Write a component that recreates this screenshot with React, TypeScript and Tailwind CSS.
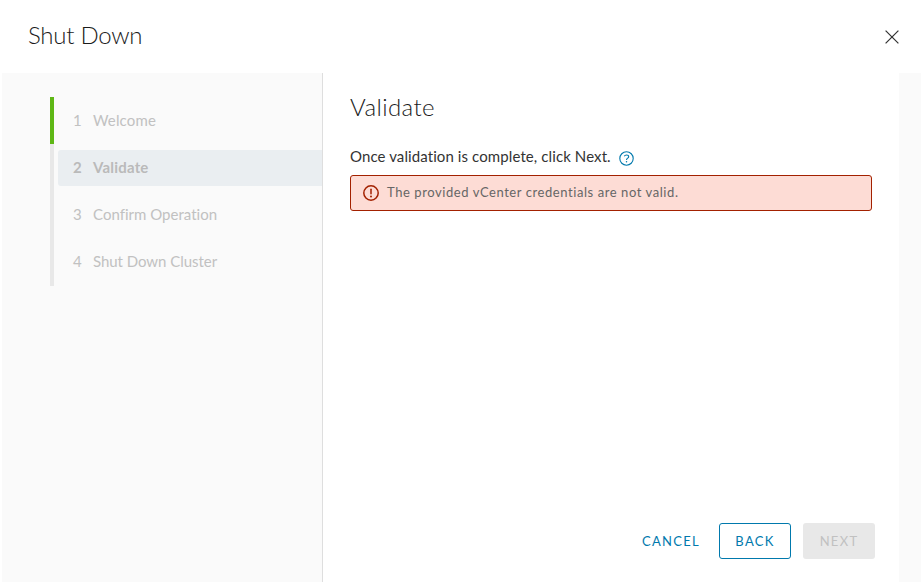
import React from "react";

const steps = [
  { label: "Welcome", spacing: "tracking-[0.15px]" },
  { label: "Validate", spacing: "tracking-[0.2px]" },
  { label: "Confirm Operation", spacing: "tracking-[0.01px]" },
  { label: "Shut Down Cluster", spacing: "tracking-[-0.04px]" },
];

const current = 1;

function CloseIcon() {
  return (
    <svg width="14" height="14" viewBox="0 0 14 14" fill="none" stroke="#333" strokeWidth="1.25">
      <path d="M0.6 0.6L13.4 13.4M13.4 0.6L0.6 13.4" />
    </svg>
  );
}

function HelpIcon() {
  return (
    <svg width="15" height="15" viewBox="0 0 15 15" fill="none" stroke="#0079ad" strokeWidth="1.1">
      <circle cx="7.5" cy="7.5" r="6.7" />
      <path d="M5.2 5.3C5.7 4.4 6.5 4 7.5 4C8.8 4 9.7 4.7 9.7 5.7C9.7 7.1 7.5 7.1 7.5 8.9" />
      <circle cx="7.5" cy="10.8" r="0.75" fill="#0079ad" stroke="none" />
    </svg>
  );
}

function ErrorIcon() {
  return (
    <svg width="16" height="16" viewBox="0 0 16 16" fill="none" stroke="#a32100" strokeWidth="1.5">
      <circle cx="8" cy="8" r="7.2" />
      <path d="M8 4.2V8.8" strokeLinecap="round" />
      <circle cx="8" cy="11.5" r="1" fill="#a32100" stroke="none" />
    </svg>
  );
}

export default function App() {
  return (
    <div className="flex h-[582px] w-[921px] flex-col overflow-hidden bg-white font-['Lato','Open_Sans',sans-serif] text-[#1b1b1b]">
      <header className="flex h-[73px] shrink-0 items-start justify-between pl-[28px] pr-[15px]">
        <h1 className="mt-[20px] text-[24px] font-light leading-[30px] tracking-[-0.25px]">Shut Down</h1>
        <button className="mt-[30px] mr-[7px]" aria-label="Close">
          <CloseIcon />
        </button>
      </header>
      <div className="flex min-h-0 flex-1 pl-[2px]">
        <aside className="flex w-[321px] items-start border-r border-[#dedede] bg-[#fafafa] pt-6 pl-12">
          <div className="h-[189px] w-1 bg-[#e8e8e8]">
            <div className="h-[47px] bg-[#5eb715]" />
          </div>
          <ol className="ml-1 mt-[6px] flex flex-1 flex-col gap-[11px]">
            {steps.map((step, i) => (
              <li
                key={step.label}
                className={
                  "flex h-9 items-center rounded-l-[3px] pb-0.5 pl-[15px] text-[15px] " +
                  (i === current ? "bg-[#eaeef1] text-[#bababa] font-bold" : "text-[#c1c1c1]")
                }
              >
                <span className="w-5">{i + 1}</span>
                <span className={step.spacing}>{step.label}</span>
              </li>
            ))}
          </ol>
        </aside>
        <main className="flex w-[576px] flex-col pl-[27px] pr-6 pt-[19px]">
          <h2 className="text-[24px] font-light leading-[30px] tracking-[0.4px]">Validate</h2>
          <div className="mt-[25px] flex h-[20px] items-center">
            <p className="-mt-0.5 w-[269px] whitespace-nowrap text-[15px] leading-5 tracking-[0.1px] text-[#333]">
              Once validation is complete, click Next.
            </p>
            <span className="mt-[2px] flex">
              <HelpIcon />
            </span>
          </div>
          <div className="mt-[8px] flex h-9 w-[522px] items-center rounded-[3px] border border-[#a32100] bg-[#fddcd5] pl-3">
            <ErrorIcon />
            <p className="ml-2 text-[13px] tracking-[0.57px] text-[#666]">
              The provided vCenter credentials are not valid.
            </p>
          </div>
          <footer className="mt-auto mb-[23px] flex h-9 items-center justify-end gap-3 text-[13px] tracking-[1.3px]">
            <button className="mr-[7px] pt-0.5 text-[#0079ad]">CANCEL</button>
            <button className="h-9 w-[72px] rounded-[3px] border border-[#0079ad] pt-0.5 text-[#0079ad]">BACK</button>
            <button className="h-9 w-[72px] rounded-[3px] bg-[#e8e8e8] pt-0.5 text-[#c1c1c1]">NEXT</button>
          </footer>
        </main>
        <div className="flex-1 bg-[#fafafa]" />
      </div>
    </div>
  );
}
